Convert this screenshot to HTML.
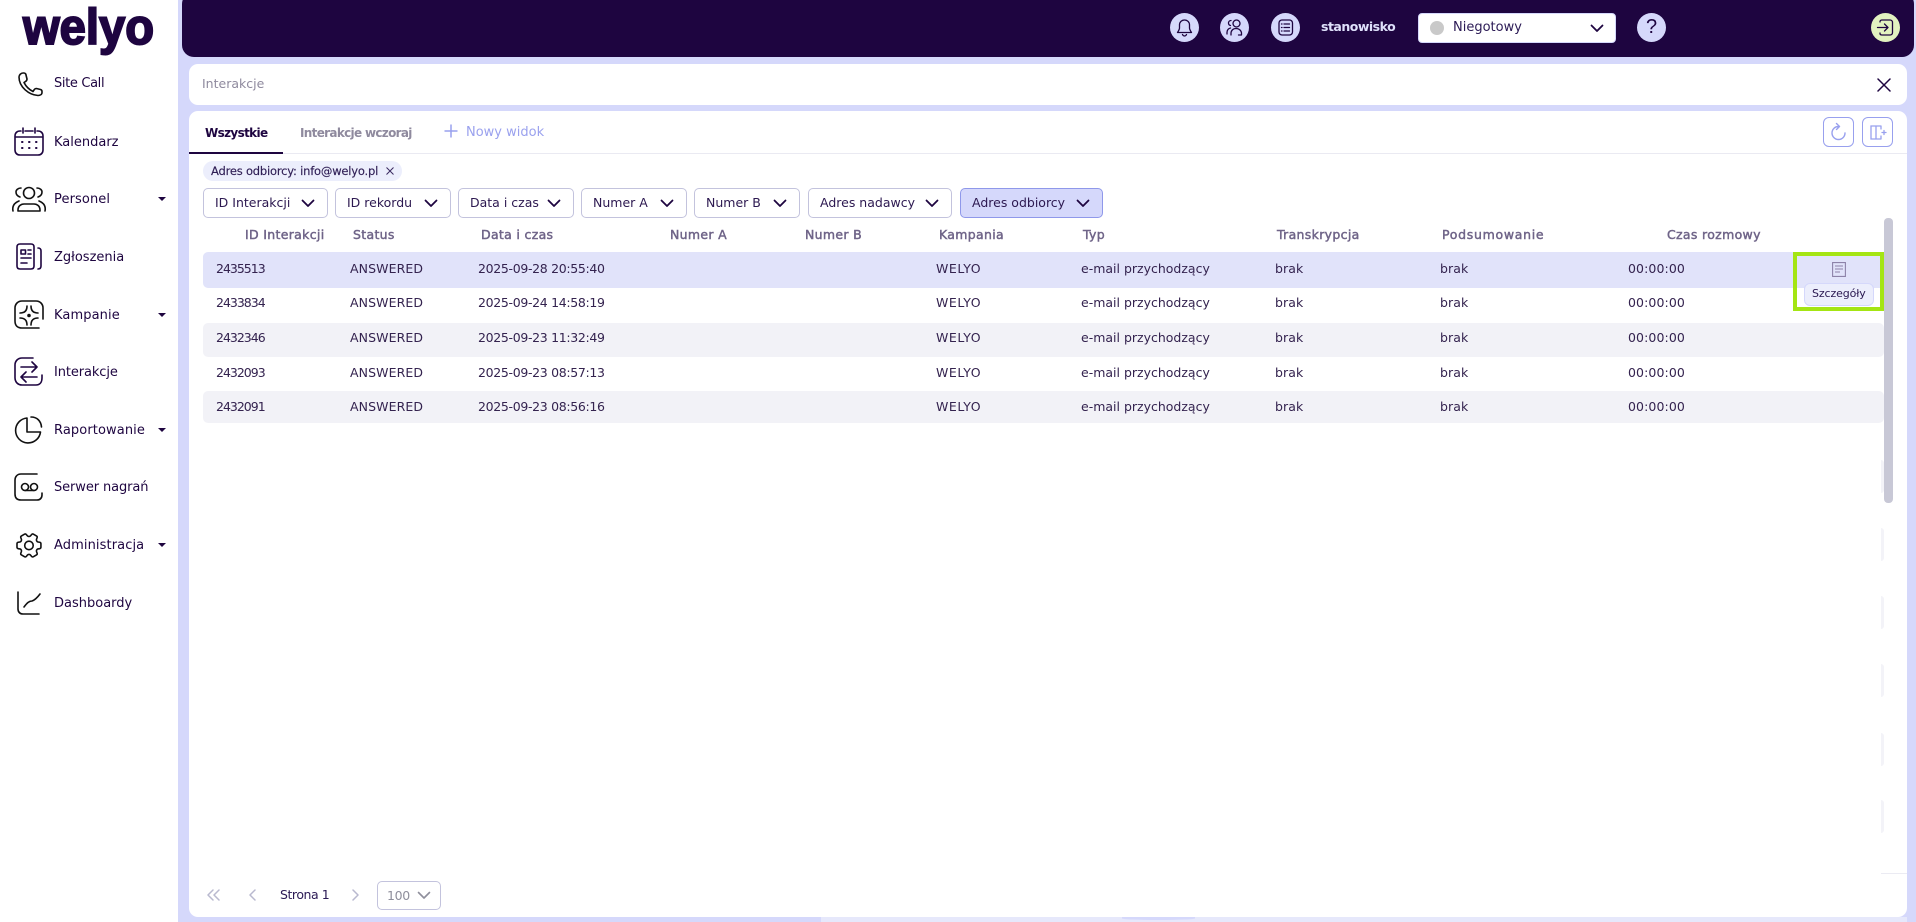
<!DOCTYPE html>
<html lang="pl"><head><meta charset="utf-8"><title>Interakcje</title>
<style>
*{box-sizing:border-box}
html,body{margin:0;padding:0;width:1916px;height:922px;overflow:hidden;background:#d5d8fb;font-family:"DejaVu Sans","Liberation Sans",sans-serif;font-size:13px;color:#1e0540}
.a,.t,svg.a{position:absolute}
.t{white-space:nowrap;line-height:16px}
.nav{left:54px;font-size:13px;color:#1e0540}
.caret{position:absolute;left:158px;width:0;height:0;border-left:4px solid transparent;border-right:4px solid transparent;border-top:4px solid #1e0540}
.f{position:absolute;top:188px;height:30px;background:#fff;border:1px solid #c3c3dd;border-radius:5px}
.f span{position:absolute;left:11px;top:6px;line-height:16px;font-size:12.5px;white-space:nowrap;color:#2c1850}
.f svg{position:absolute;right:12px;top:10px}
.h{font-size:12.5px;color:#6f6488;-webkit-text-stroke:.45px #6f6488;top:227px;letter-spacing:.32px}
.row{position:absolute;left:203px;width:1681px}
.c{font-size:12.5px;color:#34234f;letter-spacing:.1px}
.i{left:216px;letter-spacing:-1px}
.s{left:350px}
.d{left:478px;letter-spacing:-.32px}
.w{left:936px;letter-spacing:.55px}
.e{left:1081px;letter-spacing:0}
.b1{left:1275px}
.b2{left:1440px}
.z{left:1628px}
.circ{position:absolute;top:13px;width:29px;height:29px;border-radius:50%;background:#d5d8fb}
.ib{position:absolute;top:117px;width:31px;height:30px;border:1px solid #98a0ee;border-radius:6px;background:#fff}
.bar{position:absolute;left:1881px;width:3px;height:33px;background:#f3f3f8;border-radius:0 3px 3px 0}
</style></head><body>

<!-- sidebar -->
<div class="a" style="left:0;top:0;width:178px;height:922px;background:#fff"></div>
<svg class="a" style="left:0;top:0" width="178" height="60"><text x="23" y="44" font-family="Liberation Sans" font-weight="700" font-size="50" textLength="131" lengthAdjust="spacingAndGlyphs" fill="#1e0540" stroke="#1e0540" stroke-width="2">welyo</text></svg>

<svg class="a" style="left:0;top:60px" width="60" height="570" viewBox="0 60 60 570" fill="none" stroke="#1e0540" stroke-width="1.6" stroke-linecap="round" stroke-linejoin="round">
<!-- phone -->
<path stroke="#111" d="M19 77c0-2 2-4 4-4h1c1 0 2 1 2 2l1 4c0 1-.5 2-1.500 2.500l-1.500 1c2 4 5 7 9 9l1-1.500c.5-1 1.500-1.500 2.500-1.500l4 1c1 .3 1.500 1 1.500 2v1c0 2-2 3-4 3C29 95 19 87 19 77z"/>
<!-- calendar -->
<path d="M21 131h-1c-3 0-5 2-5 5v14c0 3 2 5 5 5h18c3 0 5-2 5-5v-14c0-3-2-5-5-5h-1M25 131h8M23 128v5M35 128v5M16 137h26"/>
<path stroke-width="2" d="M22 142h.5M29 142h.5M36 142h.5M22 148h.5M29 148h.5M36 148h.5"/>
<!-- personel -->
<g stroke="#111"><circle cx="29" cy="193" r="5.500"/><path d="M18 211v-1c0-4 3-6 6-6h10c3 0 6 2 6 6v1h-22M21 188c-3 0-5 2-5 4s1 4 4 5M37 188c3 0 5 2 5 4s-1 4-4 5M13 211c-1-5 1-8 6-10M45 211c1-5-1-8-6-10"/></g>
<!-- zgloszenia -->
<path d="M20 244h11c2 0 3 1 3 3v19c0 2-1 3-3 3H20c-2 0-3-1-3-3v-19c0-2 1-3 3-3zM38 248c2 0 3 1 3 3v15c0 2-1 3-3 3M28 250h3M28 254h3M21 258h10M21 263h6"/><rect x="21" y="250" width="4.500" height="4"/>
<!-- kampanie -->
<g stroke="#111"><path d="M39 328H22c-4 0-7-2-7-7v-13c0-4 3-7 7-7h14c4 0 7 3 7 7v11"/><path d="M27 306Q27 313 20 313M31 306Q31 313 38 313M27 325Q27 318 20 318M31 325Q31 318 38 318"/><circle cx="29" cy="315.500" r="1" fill="#111"/></g>
<!-- interakcje -->
<path d="M33 358H22c-4 0-7 3-7 7v13c0 4 3 7 7 7h14c4 0 6-3 6-7v-3M21 367h16M32 362l5 5-5 5M37 377H21M26 372l-5 5 5 5"/>
<!-- raportowanie -->
<g stroke="#111"><path d="M27 418a12.500 12.500 0 1 0 13.500 14H27z"/><path d="M31 417c6 0 10 4 10.500 10"/></g>
<!-- serwer -->
<g stroke="#111"><path d="M37 474H21c-4 0-6 3-6 6v14c0 4 2 6 6 6h16c3 0 5-2 5-5v-2"/><circle cx="25" cy="487" r="3.500"/><circle cx="34" cy="487" r="3.500"/><path d="M25 490.500h9"/></g>
<!-- gear -->
<g transform="translate(13,529.500) scale(1.330) rotate(90 12 12)" stroke="#111" stroke-width="1.200"><path d="M9.594 3.940c.09-.542.56-.94 1.110-.94h2.593c.55 0 1.020.398 1.110.94l.213 1.281c.063.374.313.686.645.87.074.04.147.083.22.127.325.196.72.257 1.075.124l1.217-.456a1.125 1.125 0 011.370.49l1.296 2.247a1.125 1.125 0 01-.26 1.431l-1.003.827c-.293.24-.438.613-.431.992a6.759 6.759 0 010 .255c-.007.378.138.75.43.99l1.005.828c.424.35.534.954.26 1.430l-1.298 2.247a1.125 1.125 0 01-1.369.491l-1.217-.456c-.355-.133-.75-.072-1.076.124a6.570 6.570 0 01-.22.128c-.331.183-.581.495-.644.869l-.213 1.280c-.09.543-.56.941-1.110.941h-2.594c-.55 0-1.020-.398-1.110-.94l-.213-1.281c-.062-.374-.312-.686-.644-.87a6.520 6.520 0 01-.22-.127c-.325-.196-.72-.257-1.076-.124l-1.217.456a1.125 1.125 0 01-1.369-.49l-1.297-2.247a1.125 1.125 0 01.26-1.431l1.004-.827c.292-.24.437-.613.43-.992a6.932 6.932 0 010-.255c.007-.378-.138-.75-.43-.99l-1.004-.828a1.125 1.125 0 01-.26-1.430l1.297-2.247a1.125 1.125 0 011.370-.491l1.216.456c.356.133.751.072 1.076-.124.072-.044.146-.087.22-.128.332-.183.582-.495.644-.869l.214-1.281z"/><circle cx="12" cy="12" r="3.200"/></g>
<!-- dashboard -->
<path stroke="#111" d="M18 592v17c0 3 2 5 5 5h16M24 607c3-4 5-6 8-6 3-1 5-3 8-7"/>
</svg>

<div class="t nav" style="top:76px;letter-spacing:-.35px">Site Call</div>
<div class="t nav" style="top:135px">Kalendarz</div>
<div class="t nav" style="top:192px;letter-spacing:.1px">Personel</div><div class="caret" style="top:197px"></div>
<div class="t nav" style="top:250px">Zgłoszenia</div>
<div class="t nav" style="top:308px;letter-spacing:.1px">Kampanie</div><div class="caret" style="top:313px"></div>
<div class="t nav" style="top:365px;letter-spacing:-.1px">Interakcje</div>
<div class="t nav" style="top:423px;letter-spacing:.1px">Raportowanie</div><div class="caret" style="top:428px"></div>
<div class="t nav" style="top:480px;letter-spacing:-.1px">Serwer nagrań</div>
<div class="t nav" style="top:538px;letter-spacing:.1px">Administracja</div><div class="caret" style="top:543px"></div>
<div class="t nav" style="top:596px">Dashboardy</div>

<!-- top bar -->
<div class="a" style="left:182px;top:-8px;width:1732px;height:65px;background:#1e0540;border-radius:12px"></div>
<div class="circ" style="left:1170px"><svg width="29" height="29" fill="none" stroke="#1e0540" stroke-width="1.300" stroke-linecap="round" stroke-linejoin="round"><path d="M14.500 7c-3 0-5 2.300-5 5v3c0 1.500-1 3-2 4.500h14c-1-1.500-2-3-2-4.500v-3c0-2.700-2-5-5-5zM12.500 21.500c.5 1 1.200 1.500 2 1.500s1.500-.5 2-1.500"/></svg></div>
<div class="circ" style="left:1220px"><svg width="29" height="29" fill="none" stroke="#1e0540" stroke-width="1.300" stroke-linecap="round" stroke-linejoin="round"><circle cx="16.500" cy="10.500" r="3.500"/><path d="M11 7.500c-1.500 0-2.500 1.200-2.500 2.500s.8 2.300 2 2.500M7 21v-1.500c0-2.500 1.500-4 3.500-4.500M11 22v-1.500c0-3 2-5 5-5s5.500 2 5.500 5V22h-3"/></svg></div>
<div class="circ" style="left:1271px"><svg width="29" height="29" fill="none" stroke="#1e0540" stroke-width="1.300" stroke-linecap="round" stroke-linejoin="round"><rect x="8" y="7" width="13.500" height="15" rx="3"/><path d="M13 11h5.500M13 14.500h5.500M13 18h5.500M10.500 11h.5M10.500 14.500h.5M10.500 18h.5"/></svg></div>
<div class="t" style="left:1321px;top:19px;color:#dfe1fb;font-size:12.500px;font-weight:700;letter-spacing:-.5px">stanowisko</div>
<div class="a" style="left:1418px;top:13px;width:198px;height:30px;background:#fff;border-radius:4px;border:1px solid #d5d8fb"></div>
<div class="a" style="left:1430px;top:21px;width:14px;height:14px;border-radius:50%;background:#c9c9c9"></div>
<div class="t" style="left:1453px;top:20px;font-size:13px;color:#2b1a55">Niegotowy</div>
<svg class="a" style="left:1590px;top:24px" width="14" height="9" fill="none" stroke="#1e0540" stroke-width="1.800" stroke-linecap="round" stroke-linejoin="round"><path d="M1.500 1.500 7 7l5.500-5.500"/></svg>
<div class="circ" style="left:1637px;text-align:center;line-height:29px;font-family:'Liberation Sans',sans-serif;font-size:20px;color:#1e0540">?</div>
<div class="circ" style="left:1871px;background:#e2f2c0"><svg width="29" height="29" fill="none" stroke="#1e0540" stroke-width="1.300" stroke-linecap="round" stroke-linejoin="round"><path d="M9 9V8.500C9 7.500 10 7 11 7h8c1.500 0 2.500 1 2.500 2.500v10c0 1.500-1 2.500-2.500 2.500h-8c-1 0-2-.5-2-1.500V20M6.500 14.500H17M13.500 11l3.500 3.500-3.500 3.500"/></svg></div>

<!-- title card -->
<div class="a" style="left:189px;top:64px;width:1718px;height:41px;background:#fff;border-radius:9px"></div>
<div class="t" style="left:202px;top:76px;color:#8f8a9e;font-size:12.500px">Interakcje</div>
<svg class="a" style="left:1877px;top:78px" width="14" height="14" stroke="#1e0540" stroke-width="1.500" stroke-linecap="round"><path d="M1 1l12 12M13 1 1 13"/></svg>

<!-- main card -->
<div class="a" style="left:189px;top:111px;width:1718px;height:806px;background:#fff;border-radius:9px"></div>
<div class="a" style="left:189px;top:153px;width:1718px;height:1px;background:#eaeaf2"></div>
<div class="a" style="left:189px;top:152px;width:94px;height:2px;background:#1e0540"></div>
<div class="t" style="left:205px;top:125px;font-size:12px;font-weight:700;letter-spacing:-.65px;color:#1e0540">Wszystkie</div>
<div class="t" style="left:300px;top:125px;font-size:12px;font-weight:700;letter-spacing:-.68px;color:#8f8a9e">Interakcje wczoraj</div>
<svg class="a" style="left:443px;top:123px" width="16" height="16" stroke="#98a0ee" stroke-width="1.500"><path d="M8 1.500v13M1.500 8h13"/></svg>
<div class="t" style="left:466px;top:125px;font-size:13px;color:#9aa1ee">Nowy widok</div>

<div class="ib" style="left:1823px"><svg width="29" height="28" fill="none" stroke="#98a0ee" stroke-width="1.400" stroke-linecap="round" stroke-linejoin="round"><path d="M14.500 8.500a6.500 6.500 0 1 0 6.500 6.500M12.500 5.500l3 3-3 3"/></svg></div>
<div class="ib" style="left:1862px"><svg width="29" height="28" fill="none" stroke="#98a0ee" stroke-width="1.300" stroke-linecap="round"><path d="M18 8H8v13h10M13 8v13M18 8v3M18 18v3M19 14.500h4M21 12.500v4"/></svg></div>

<!-- chip -->
<div class="a" style="left:203px;top:161px;width:199px;height:20px;background:#eceefc;border-radius:10px"></div>
<div class="t" style="left:211px;top:163px;font-size:11.500px;letter-spacing:-.2px;color:#2f1e55;-webkit-text-stroke:.15px #2f1e55">Adres odbiorcy: info@welyo.pl</div>
<svg class="a" style="left:386px;top:167px" width="8" height="8" stroke="#3a2a60" stroke-width="1"><path d="M.5.500l7 7M7.500.500l-7 7"/></svg>

<!-- filters -->
<div class="f" style="left:203px;width:125px"><span>ID Interakcji</span><svg width="14" height="9" fill="none" stroke="#1e0540" stroke-width="1.800" stroke-linecap="round" stroke-linejoin="round"><path d="M1.500 1.500 7 7l5.500-5.500"/></svg></div>
<div class="f" style="left:335px;width:116px"><span>ID rekordu</span><svg width="14" height="9" fill="none" stroke="#1e0540" stroke-width="1.800" stroke-linecap="round" stroke-linejoin="round"><path d="M1.500 1.500 7 7l5.500-5.500"/></svg></div>
<div class="f" style="left:458px;width:116px"><span>Data i czas</span><svg width="14" height="9" fill="none" stroke="#1e0540" stroke-width="1.800" stroke-linecap="round" stroke-linejoin="round"><path d="M1.500 1.500 7 7l5.500-5.500"/></svg></div>
<div class="f" style="left:581px;width:106px"><span>Numer A</span><svg width="14" height="9" fill="none" stroke="#1e0540" stroke-width="1.800" stroke-linecap="round" stroke-linejoin="round"><path d="M1.500 1.500 7 7l5.500-5.500"/></svg></div>
<div class="f" style="left:694px;width:106px"><span>Numer B</span><svg width="14" height="9" fill="none" stroke="#1e0540" stroke-width="1.800" stroke-linecap="round" stroke-linejoin="round"><path d="M1.500 1.500 7 7l5.500-5.500"/></svg></div>
<div class="f" style="left:808px;width:144px"><span>Adres nadawcy</span><svg width="14" height="9" fill="none" stroke="#1e0540" stroke-width="1.800" stroke-linecap="round" stroke-linejoin="round"><path d="M1.500 1.500 7 7l5.500-5.500"/></svg></div>
<div class="f" style="left:960px;width:143px;background:#d5d8fb;border-color:#8f98ea"><span>Adres odbiorcy</span><svg width="14" height="9" fill="none" stroke="#1e0540" stroke-width="1.800" stroke-linecap="round" stroke-linejoin="round"><path d="M1.500 1.500 7 7l5.500-5.500"/></svg></div>

<!-- table header -->
<div class="t h" style="left:245px">ID Interakcji</div>
<div class="t h" style="left:353px">Status</div>
<div class="t h" style="left:481px">Data i czas</div>
<div class="t h" style="left:670px">Numer A</div>
<div class="t h" style="left:805px">Numer B</div>
<div class="t h" style="left:939px">Kampania</div>
<div class="t h" style="left:1083px">Typ</div>
<div class="t h" style="left:1277px">Transkrypcja</div>
<div class="t h" style="left:1442px;letter-spacing:.7px">Podsumowanie</div>
<div class="t h" style="left:1667px">Czas rozmowy</div>

<!-- rows -->
<div class="row" style="top:252px;height:36px;background:#e1e3fa;border-radius:5px 0 0 5px"></div>
<div class="row" style="top:323px;height:34px;background:#f2f2f7;border-radius:5px"></div>
<div class="row" style="top:391px;height:32px;background:#f2f2f7;border-radius:5px"></div>

<div class="t c i" style="top:261px">2435513</div><div class="t c s" style="top:261px">ANSWERED</div><div class="t c d" style="top:261px">2025-09-28 20:55:40</div><div class="t c w" style="top:261px">WELYO</div><div class="t c e" style="top:261px">e-mail przychodzący</div><div class="t c b1" style="top:261px">brak</div><div class="t c b2" style="top:261px">brak</div><div class="t c z" style="top:261px">00:00:00</div>
<div class="t c i" style="top:295px">2433834</div><div class="t c s" style="top:295px">ANSWERED</div><div class="t c d" style="top:295px">2025-09-24 14:58:19</div><div class="t c w" style="top:295px">WELYO</div><div class="t c e" style="top:295px">e-mail przychodzący</div><div class="t c b1" style="top:295px">brak</div><div class="t c b2" style="top:295px">brak</div><div class="t c z" style="top:295px">00:00:00</div>
<div class="t c i" style="top:330px">2432346</div><div class="t c s" style="top:330px">ANSWERED</div><div class="t c d" style="top:330px">2025-09-23 11:32:49</div><div class="t c w" style="top:330px">WELYO</div><div class="t c e" style="top:330px">e-mail przychodzący</div><div class="t c b1" style="top:330px">brak</div><div class="t c b2" style="top:330px">brak</div><div class="t c z" style="top:330px">00:00:00</div>
<div class="t c i" style="top:365px">2432093</div><div class="t c s" style="top:365px">ANSWERED</div><div class="t c d" style="top:365px">2025-09-23 08:57:13</div><div class="t c w" style="top:365px">WELYO</div><div class="t c e" style="top:365px">e-mail przychodzący</div><div class="t c b1" style="top:365px">brak</div><div class="t c b2" style="top:365px">brak</div><div class="t c z" style="top:365px">00:00:00</div>
<div class="t c i" style="top:399px">2432091</div><div class="t c s" style="top:399px">ANSWERED</div><div class="t c d" style="top:399px">2025-09-23 08:56:16</div><div class="t c w" style="top:399px">WELYO</div><div class="t c e" style="top:399px">e-mail przychodzący</div><div class="t c b1" style="top:399px">brak</div><div class="t c b2" style="top:399px">brak</div><div class="t c z" style="top:399px">00:00:00</div>

<!-- highlight -->
<div class="a" style="left:1793px;top:252px;width:91px;height:59px;border:4px solid #a4e513"></div>
<svg class="a" style="left:1832px;top:262px" width="14" height="15" fill="none" stroke="#8d82a8" stroke-width="1.100"><path d="M.6.600h12.800v13.800H.6zM3 4h8M3 7h8M3 10h5"/></svg>
<div class="a" style="left:1804px;top:283px;width:70px;height:23px;background:#eceefc;border:1px solid #d5d8fb;border-radius:6px"></div>
<div class="t" style="left:1812px;top:286px;font-size:11px;letter-spacing:-.12px;color:#2a1850">Szczegóły</div>

<!-- scrollbar -->
<div class="a" style="left:1884px;top:218px;width:9px;height:285px;background:#c8c8d6;border-radius:4px"></div>
<div class="bar" style="top:460px"></div><div class="bar" style="top:528px"></div><div class="bar" style="top:596px"></div><div class="bar" style="top:664px"></div><div class="bar" style="top:733px"></div><div class="bar" style="top:800px"></div>
<div class="a" style="left:1881px;top:873px;width:26px;height:1px;background:#ebebf3"></div>

<!-- pagination -->
<svg class="a" style="left:205px;top:888px" width="160" height="14" fill="none" stroke="#b9b9cf" stroke-width="1.500" stroke-linecap="round" stroke-linejoin="round"><path d="M8 2 3 7l5 5M14 2 9 7l5 5M50 2l-5 5 5 5M148 2l5 5-5 5"/></svg>
<div class="t" style="left:280px;top:887px;font-size:12.500px;letter-spacing:-.45px;color:#2b1a55">Strona 1</div>
<div class="a" style="left:377px;top:881px;width:64px;height:29px;border:1px solid #c3c3dd;border-radius:5px;background:#fff"></div>
<div class="t" style="left:387px;top:888px;font-size:12.500px;color:#8f8f9c;letter-spacing:-.3px">100</div>
<svg class="a" style="left:417px;top:891px" width="14" height="9" fill="none" stroke="#8f8f9c" stroke-width="1.600" stroke-linecap="round" stroke-linejoin="round"><path d="M1.500 1.500 7 7l5.500-5.500"/></svg>

<!-- bottom strip -->
<div class="a" style="left:821px;top:917px;width:1086px;height:5px;background:#e6e8fb"></div>
<div class="a" style="left:1122px;top:917px;width:73px;height:3px;background:#d5d8fb;border-radius:0 0 50% 50%"></div>
</body></html>
